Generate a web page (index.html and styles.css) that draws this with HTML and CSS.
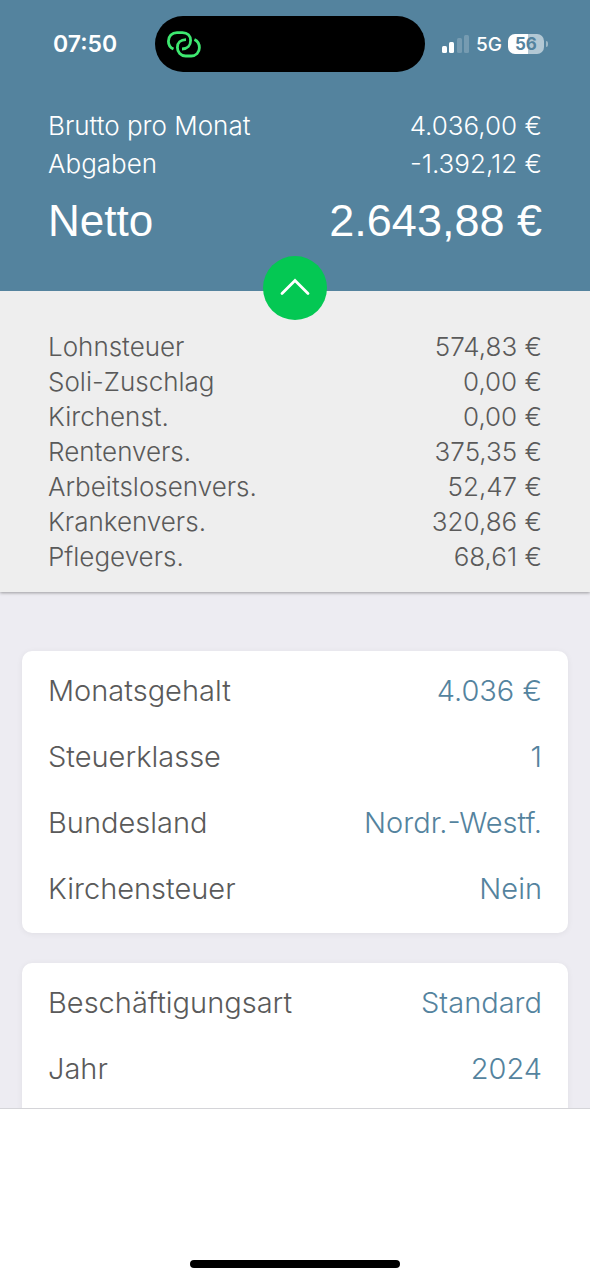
FILE: index.html
```html
<!DOCTYPE html>
<html lang="de">
<head>
<meta charset="utf-8">
<meta name="viewport" content="width=device-width, initial-scale=1">
<title>Brutto Netto Rechner</title>
<link rel="stylesheet" href="styles.css">
</head>
<body>
<div class="app">
  <header class="header">
    <div class="status">
      <time class="clock">07:50</time>
      <div class="island">
        <svg class="link-icon" viewBox="0 0 36 30" width="36" height="30" aria-hidden="true">
          <g fill="none" stroke="#3ee870" stroke-width="2.8" stroke-linecap="butt">
            <path d="M7.500 20C4.200 18.600 2.400 15.800 2.400 12.200C2.400 7.200 6 3.600 11 3.600H16.500C21.500 3.600 24.600 6.800 24.600 11.600C24.600 16.400 21.400 20 16 20"/>
            <path d="M20 10.600C14.600 10.600 11.400 14 11.400 18.400C11.400 23.400 14.800 27 19.600 27H25.200C30 27 33.400 23.400 33.400 18.800C33.400 15 31.600 12.100 28.400 10.600"/>
          </g>
        </svg>
      </div>
      <div class="signals">
        <svg viewBox="0 0 28 18" width="28" height="18" fill="#fff" aria-hidden="true">
          <rect x="0" y="11" width="5" height="7" rx="1.500"/>
          <rect x="7" y="7" width="5" height="11" rx="1.500"/>
          <rect x="15" y="3" width="5" height="15" rx="1.500" opacity=".2"/>
          <rect x="22" y="0" width="5" height="18" rx="1.500" opacity=".2"/>
        </svg>
        <span class="network">5G</span>
        <span class="battery">56</span>
      </div>
    </div>
    <dl class="totals">
      <div class="row"><dt>Brutto pro Monat</dt><dd>4.036,00 €</dd></div>
      <div class="row"><dt>Abgaben</dt><dd>-1.392,12 €</dd></div>
      <div class="row net"><dt>Netto</dt><dd>2.643,88 €</dd></div>
    </dl>
    <button class="toggle" type="button" aria-label="Details ausblenden">
      <svg viewBox="0 0 32 20" width="32" height="20" aria-hidden="true">
        <path d="M3 15.500L16 2.500L29 15.500" fill="none" stroke="#fff" stroke-width="2.800" stroke-linecap="round"/>
      </svg>
    </button>
  </header>

  <dl class="details">
    <div class="row"><dt>Lohnsteuer</dt><dd>574,83 €</dd></div>
    <div class="row"><dt>Soli-Zuschlag</dt><dd>0,00 €</dd></div>
    <div class="row"><dt>Kirchenst.</dt><dd>0,00 €</dd></div>
    <div class="row"><dt>Rentenvers.</dt><dd>375,35 €</dd></div>
    <div class="row"><dt>Arbeitslosenvers.</dt><dd>52,47 €</dd></div>
    <div class="row"><dt>Krankenvers.</dt><dd>320,86 €</dd></div>
    <div class="row"><dt>Pflegevers.</dt><dd>68,61 €</dd></div>
  </dl>

  <main class="settings">
    <section class="card">
      <div class="row"><span id="salary">Monatsgehalt</span><button type="button" aria-describedby="salary">4.036 €</button></div>
      <div class="row"><span id="class">Steuerklasse</span><button type="button" aria-describedby="class">1</button></div>
      <div class="row"><span id="state">Bundesland</span><button type="button" aria-describedby="state">Nordr.-Westf.</button></div>
      <div class="row"><span id="church">Kirchensteuer</span><button type="button" aria-describedby="church">Nein</button></div>
    </section>
    <section class="card card-last">
      <div class="row"><span id="job">Beschäftigungsart</span><button type="button" aria-describedby="job">Standard</button></div>
      <div class="row"><span id="year">Jahr</span><button type="button" aria-describedby="year">2024</button></div>
    </section>
  </main>

  <footer class="footer"><div class="home-bar"></div></footer>
</div>
</body>
</html>
```
FILE: styles.css
```css
* {
  box-sizing: border-box;
}

body {
  margin: 0;
  font-family: Inter, "Liberation Sans", sans-serif;
  font-weight: 300;
  color: #5a5a5a;
}

dl,
dd {
  margin: 0;
}

.app {
  display: flex;
  flex-direction: column;
  height: 100vh;
  background: #edecf2;
}

.row {
  display: flex;
  justify-content: space-between;
  align-items: center;
  white-space: nowrap;
}

.header {
  position: relative;
  z-index: 2;
  flex: none;
  padding: 16px 0 36px;
  background: #54839e;
  color: #fff;
}

.status {
  display: grid;
  grid-template-columns: 1fr 270px 1fr;
  align-items: center;
  height: 56px;
  padding-right: 10px;
}

.clock {
  padding-left: 53px;
  font-size: 23px;
  font-weight: 600;
}

.island {
  display: flex;
  align-items: center;
  height: 56px;
  padding-left: 11px;
  border-radius: 28px;
  background: #000;
}

.signals {
  display: flex;
  align-items: center;
  gap: 6px;
  padding-left: 17px;
}

.network {
  font-size: 19px;
  font-weight: 500;
}

.battery {
  position: relative;
  width: 36px;
  border-radius: 7px;
  background: linear-gradient(90deg, #fff 56%, #b3c8d4 56%);
  color: #54839e;
  font-size: 17px;
  font-weight: 700;
  line-height: 20px;
  text-align: center;
}

.battery::after {
  content: "";
  position: absolute;
  top: 7px;
  right: -4px;
  width: 2px;
  height: 6px;
  border-radius: 0 2px 2px 0;
  background: #9bb7c6;
}

.totals {
  padding: 35px 48px 0;
  font-size: 26px;
  line-height: 38px;
}

.net {
  padding-top: 4px;
  font-family: "Liberation Sans", Arial, sans-serif;
  font-size: 44px;
  font-weight: 400;
  line-height: 68px;
}

.net dd {
  font-size: 45px;
}

.toggle {
  position: absolute;
  bottom: -29px;
  left: 50%;
  display: flex;
  align-items: center;
  justify-content: center;
  width: 64px;
  height: 64px;
  margin-left: -32px;
  padding: 0;
  border: 0;
  border-radius: 50%;
  background: #04c853;
}

.details {
  z-index: 1;
  flex: none;
  padding: 38px 48px 18px;
  background: #eee;
  box-shadow: 0 1px 3px rgba(0, 0, 0, 0.35);
  font-size: 26px;
  line-height: 35px;
}

.settings {
  display: flex;
  flex: 1;
  flex-direction: column;
  gap: 30px;
  min-height: 0;
  overflow: hidden auto;
  padding: 59px 22px 0;
  scrollbar-width: none;
}

.card {
  flex: none;
  padding: 7px 26px 11px;
  border-radius: 10px;
  background: #fff;
  box-shadow: 0 1px 6px rgba(0, 0, 0, 0.06);
  font-size: 29px;
  line-height: 66px;
}

.card-last {
  padding-bottom: 28px;
}

.card button {
  padding: 0;
  border: 0;
  background: none;
  color: #54839e;
  font: inherit;
}

.footer {
  display: flex;
  flex: none;
  align-items: flex-end;
  justify-content: center;
  height: 172px;
  padding-bottom: 12px;
  border-top: 1px solid #d4d4d8;
  background: #fff;
}

.home-bar {
  width: 210px;
  height: 8px;
  border-radius: 4px;
  background: #000;
}
```
